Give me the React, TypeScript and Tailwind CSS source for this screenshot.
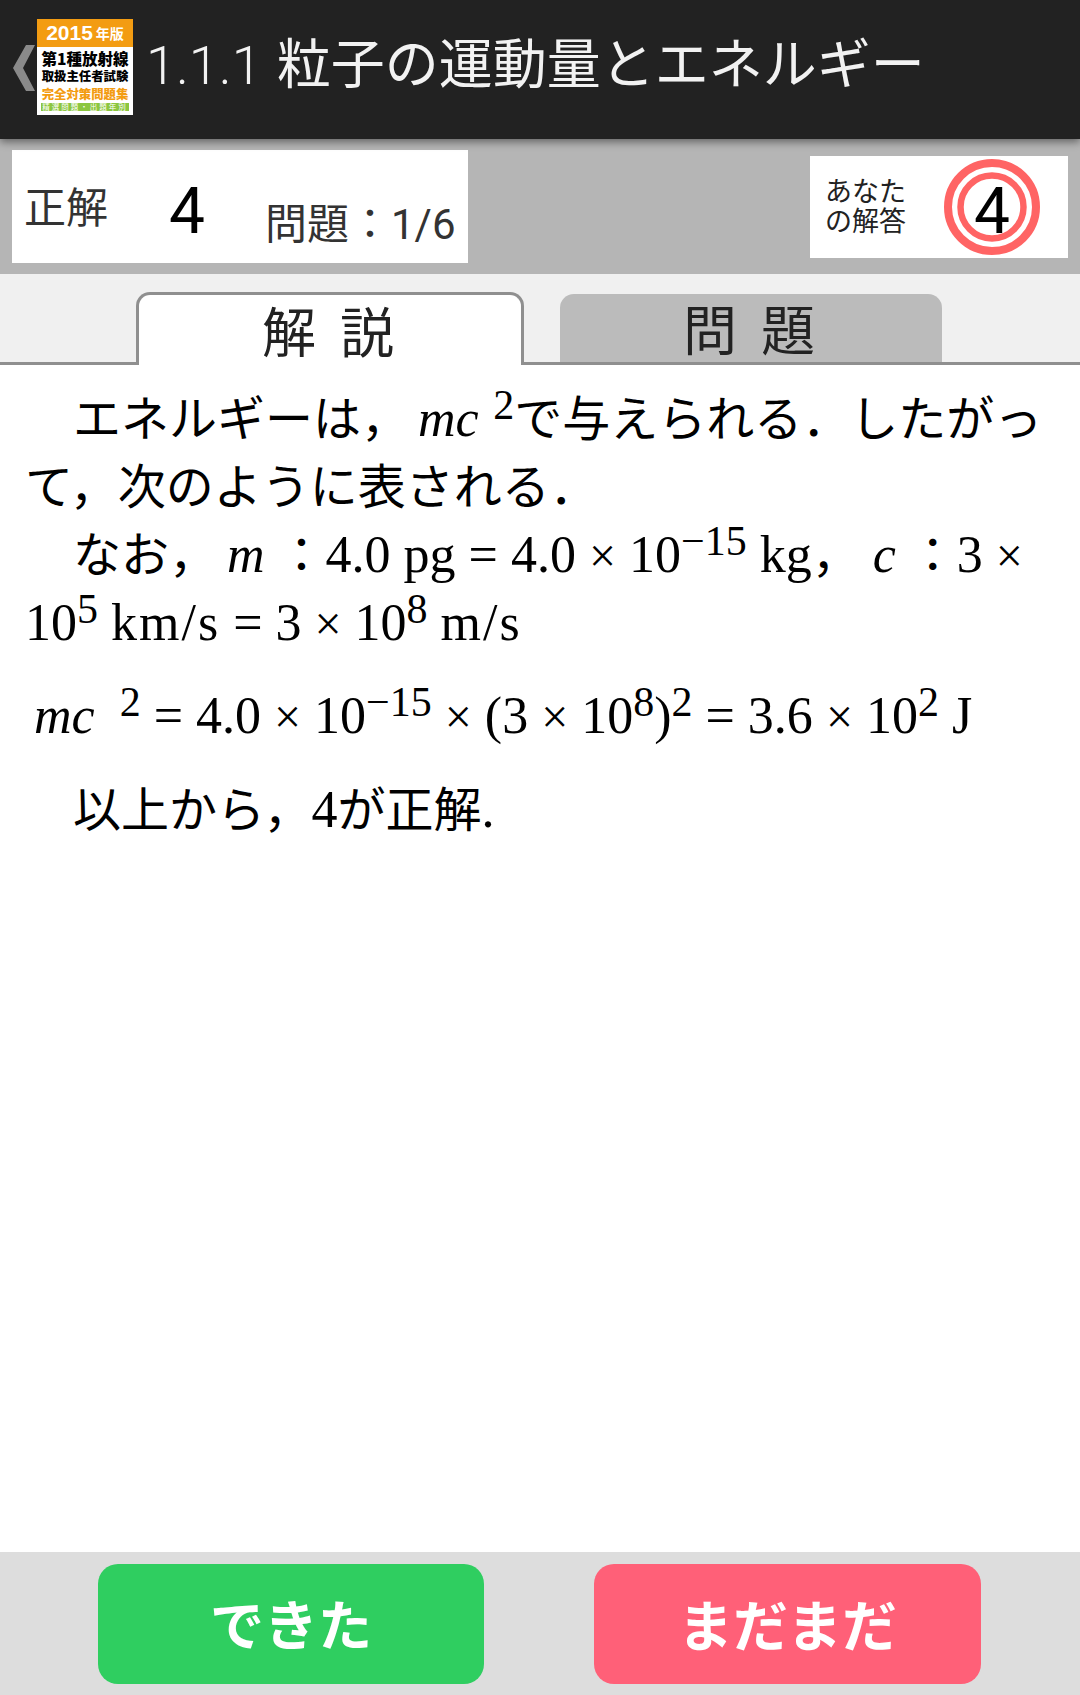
import React from "react";

const M = ({ children }: { children: React.ReactNode }) => (
  <span className="text-[52px] leading-[0]">{children}</span>
);

const Sup = ({ children }: { children: React.ReactNode }) => (
  <span className="text-[42px] leading-[0] align-[17px]">{children}</span>
);

const X = () => (
  <span className="text-[52px] leading-[0]">
    {" "}
    <span className="text-[48px]">×</span>{" "}
  </span>
);

const U = ({ children }: { children: React.ReactNode }) => (
  <span className="text-[52px] leading-[0] tracking-[2px]">{children}</span>
);

const I = ({ children }: { children: React.ReactNode }) => (
  <span className="italic">{children}</span>
);

function Logo() {
  return (
    <div className="w-[96px] h-[96px] bg-white flex flex-col items-center shrink-0 font-['Noto_Sans_CJK_JP',sans-serif] font-black mt-[-6px]">
      <div className="w-full h-[28px] bg-[#f39c12] text-white flex items-center justify-center gap-[3px] shrink-0">
        <span className="text-[21px] leading-none font-['Liberation_Sans',sans-serif] font-bold">2015</span>
        <span className="text-[14px] leading-none font-bold">年版</span>
      </div>
      <div className="text-[15.5px] leading-[18px] mt-[2px] text-black whitespace-nowrap">第1種放射線</div>
      <div className="text-[12.4px] leading-[18px] text-black whitespace-nowrap">取扱主任者試験</div>
      <div className="text-[12.4px] leading-[18px] text-[#f39c12] whitespace-nowrap">完全対策問題集</div>
      <div className="w-[88px] h-[8px] bg-[#8cc63f] text-white text-[7.5px] leading-[8px] tracking-[2px] text-center whitespace-nowrap font-normal">
        精選問題・出題年別
      </div>
    </div>
  );
}

export default function App() {
  return (
    <div className="w-[1080px] h-[1695px] flex flex-col bg-white overflow-hidden font-['Roboto','Noto_Sans_CJK_JP',sans-serif]">
      <header className="h-[139px] bg-[#222222] flex items-center pl-[13px] relative z-10 shadow-[0_3px_8px_rgba(0,0,0,0.45)] shrink-0">
        <svg width="24" height="46" viewBox="0 0 24 46" className="shrink-0 mt-[-3px]">
          <path d="M13 0H22L10 23L22 46H13L0 23Z" fill="#8a8a8a" />
        </svg>
        <Logo />
        <h1 className="ml-[13px] text-[#f2f2f2] font-normal whitespace-nowrap flex items-baseline text-[54px] leading-none mt-[-8px]">
          <span className="text-[54px] font-light mr-[15px]">1.1.1</span>
          <span>粒子の運動量とエネルギー</span>
        </h1>
      </header>

      <section className="h-[135px] bg-[#b5b5b5] flex items-center justify-between pl-[12px] pr-[12px] shrink-0">
        <div className="w-[456px] h-[113px] bg-white flex items-center pl-[12px] whitespace-nowrap">
          <span className="text-[42px] leading-none text-[#333333] mt-[4px]">正解</span>
          <span className="text-[64px] leading-none text-black ml-[61px] mt-[10px]">4</span>
          <span className="text-[42px] leading-none text-[#333333] ml-[60px] mt-[36px]">問題：1/6</span>
        </div>
        <div className="w-[258px] h-[102px] bg-white flex items-center pl-[15px]">
          <div className="text-[27px] leading-[30px] text-[#222222] font-['Noto_Sans_CJK_JP',sans-serif] whitespace-nowrap mt-[-3px]">
            あなた
            <br />
            の解答
          </div>
          <div className="relative w-[98px] h-[98px] ml-[37px] flex items-center justify-center">
            <svg width="98" height="98" viewBox="0 0 98 98" className="absolute inset-0">
              <circle cx="49" cy="49" r="44" fill="none" stroke="#ff6464" strokeWidth="8" />
              <circle cx="49" cy="49" r="31.5" fill="none" stroke="#ff6464" strokeWidth="6.5" />
            </svg>
            <span className="relative text-[64px] leading-none text-black mt-[10px]">4</span>
          </div>
        </div>
      </section>

      <nav className="h-[91px] bg-[#f0f0f0] border-b-[3px] border-[#8f8f8f] flex items-end pl-[136px] gap-[36px] shrink-0 font-['Noto_Sans_CJK_JP',sans-serif]">
        <div className="w-[388px] h-[73px] -mb-[3px] bg-white border-[3px] border-b-0 border-[#8f8f8f] rounded-t-[14px] flex items-center justify-center text-[54px] leading-none text-[#222222] tracking-[24px] pl-[20px]">
          解説
        </div>
        <div className="w-[382px] h-[68px] bg-[#bbbbbb] rounded-t-[14px] flex items-center justify-center text-[54px] leading-none text-[#222222] tracking-[24px] pl-[20px]">
          問題
        </div>
      </nav>

      <main className="flex-1 pl-[25px] pt-[21px] text-black text-[48px] leading-[68px] whitespace-nowrap font-['Liberation_Serif','Noto_Sans_CJK_JP',serif]">
        <p className="indent-[48px]">
          エネルギーは，
          <span className="ml-[9px]">
            <M><I>mc</I></M>
          </span>
          <span className="ml-[4px]">
            <Sup> 2</Sup>
          </span>
          で与えられる．したがっ
        </p>
        <p>て，次のように表される．</p>
        <p className="indent-[48px]">
          なお，
          <span className="ml-[10px]">
            <M><I>m</I> </M>
          </span>
          ：<M>4.0 pg = 4.0</M>
          <X />
          <M>10</M>
          <Sup>−15</Sup>
          <M> kg</M>，
          <span className="ml-[13px]">
            <M><I>c</I> </M>
          </span>
          ：<M>3</M>
          <X />
        </p>
        <p>
          <M>10</M>
          <Sup>5</Sup>
          <M> </M>
          <U>km/s</U>
          <M> = 3</M>
          <X />
          <M>10</M>
          <Sup>8</Sup>
          <M> </M>
          <U>m/s</U>
        </p>
        <p className="mt-[25px] ml-[9px]">
          <M><I>mc</I> </M>
          <span className="ml-[12px]">
            <Sup>2</Sup>
          </span>
          <M> = 4.0</M>
          <X />
          <M>10</M>
          <Sup>−15</Sup>
          <X />
          <M>(3</M>
          <X />
          <M>10</M>
          <Sup>8</Sup>
          <M>)</M>
          <Sup>2</Sup>
          <M> = 3.6</M>
          <X />
          <M>10</M>
          <Sup>2</Sup>
          <M> J</M>
        </p>
        <p className="mt-[26px] indent-[48px]">
          以上から，<M>4</M>が正解<M>.</M>
        </p>
      </main>

      <footer className="h-[143px] bg-[#dddddd] flex items-start justify-between pt-[12px] pl-[98px] pr-[99px] shrink-0 font-['Noto_Sans_CJK_JP',sans-serif]">
        <button className="w-[386px] h-[120px] rounded-[20px] bg-[#2fce60] text-white text-[54px] font-bold leading-none pb-[3px]">
          できた
        </button>
        <button className="w-[387px] h-[120px] rounded-[20px] bg-[#ff6078] text-white text-[55px] font-bold leading-none pb-[3px]">
          まだまだ
        </button>
      </footer>
    </div>
  );
}
